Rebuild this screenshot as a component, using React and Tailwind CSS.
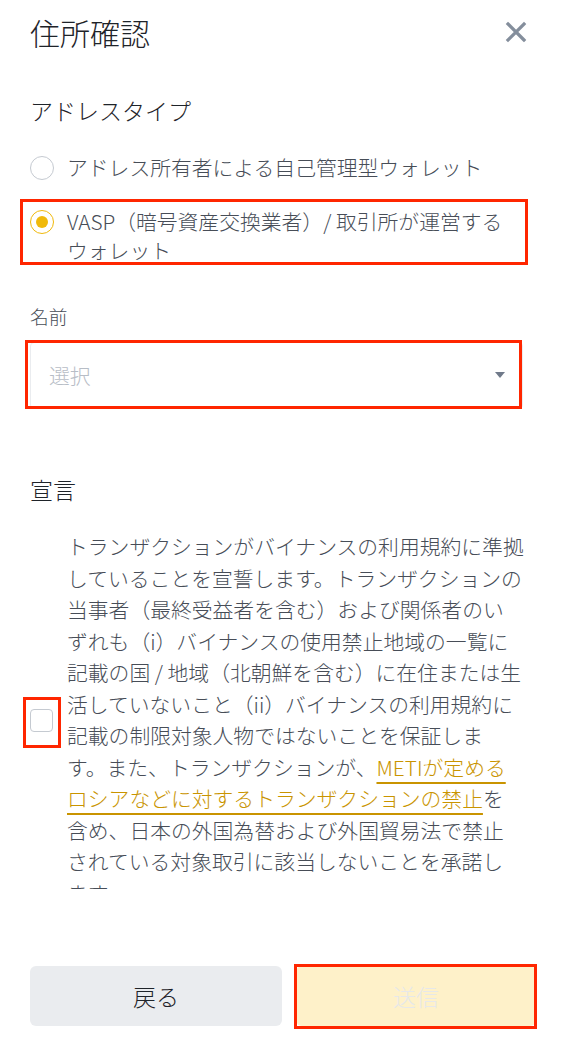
import React from 'react';

const lines = [
  'トランザクションがバイナンスの利用規約に準拠',
  'していることを宣誓します。トランザクションの',
  '当事者（最終受益者を含む）および関係者のい',
  'ずれも（i）バイナンスの使用禁止地域の一覧に',
  '記載の国 / 地域（北朝鮮を含む）に在住または生',
  '活していないこと（ii）バイナンスの利用規約に',
  '記載の制限対象人物ではないことを保証しま',
];

function Radio({ checked }) {
  return (
    <span className="h-[29px] flex items-center shrink-0">
      {checked ? (
        <span className="w-[24px] h-[24px] rounded-full border-[1.5px] border-[#f0b90b] flex items-center justify-center">
          <span className="w-[12px] h-[12px] rounded-full bg-[#f0b90b]" />
        </span>
      ) : (
        <span className="w-[24px] h-[24px] rounded-full border-[1.5px] border-[#c5cad1]" />
      )}
    </span>
  );
}

export default function App() {
  return (
    <div className="relative w-[562px] h-[1054px] bg-white overflow-hidden font-light font-['Noto_Sans_CJK_JP','Noto_Sans',sans-serif]">
      {/* header */}
      <div className="flex items-center justify-between pl-[30px] pr-[35px] pt-[12px] h-[52px]">
        <h1 className="text-[30px] leading-[40px] text-[#1e2329]">住所確認</h1>
        <svg width="22" height="22" viewBox="0 0 22 22" className="text-[#848e9c]">
          <path d="M3 3L19 19M19 3L3 19" stroke="currentColor" strokeWidth="3.2" strokeLinecap="square" />
        </svg>
      </div>

      {/* body */}
      <div className="h-[837px] overflow-hidden px-[30px]">
        <div className="mt-[43px] text-[23px] leading-[30px] text-[#1e2329]">アドレスタイプ</div>

        <div className="mt-[28px] flex flex-col gap-[25px] text-[20.8px] leading-[29px] text-[#474d57]">
          <div className="flex items-start gap-[13px]">
            <Radio />
            <span>アドレス所有者による自己管理型ウォレット</span>
          </div>
          <div className="flex items-start gap-[13px]">
            <Radio checked />
            <span>
              VASP（暗号資産交換業者）/ 取引所が運営する
              <br />
              ウォレット
            </span>
          </div>
        </div>

        <div className="mt-[38px] text-[18.7px] leading-[26px] text-[#474d57]">名前</div>
        <div className="mt-[13px] w-[493px] h-[67px] border border-[#eaecef] rounded-[4px] flex items-center justify-between pl-[18px] pr-[17px]">
          <span className="text-[20.8px] text-[#b7bdc6]">選択</span>
          <svg width="10" height="7" viewBox="0 0 10 7">
            <path d="M0 0H10L5 6Z" fill="#707a8a" />
          </svg>
        </div>

        <div className="mt-[65px] text-[23px] leading-[30px] text-[#1e2329]">宣言</div>

        <div className="mt-[27px] flex items-center gap-[14px]">
          <span className="w-[23px] h-[23px] rounded-[4px] border-[1.5px] border-[#c5cad1] shrink-0" />
          <p className="text-[20.8px] leading-[31.5px] text-[#474d57] whitespace-nowrap">
            {lines.map((l) => (
              <React.Fragment key={l}>
                {l}
                <br />
              </React.Fragment>
            ))}
            す。また、トランザクションが、
            <a className="text-[#c99400] underline decoration-2 underline-offset-[6px]">METIが定める</a>
            <br />
            <a className="text-[#c99400] underline decoration-2 underline-offset-[6px]">ロシアなどに対するトランザクションの禁止</a>を
            <br />
            含め、日本の外国為替および外国貿易法で禁止
            <br />
            されている対象取引に該当しないことを承諾し
            <br />
            ます。
          </p>
        </div>
      </div>

      {/* footer */}
      <div className="mt-[77px] flex gap-[14px] pl-[30px]">
        <button className="w-[252px] h-[60px] rounded-[6px] bg-[#eaecef] text-[23px] text-[#1e2329]">戻る</button>
        <button className="w-[240px] h-[60px] rounded-[6px] bg-[#fef1c9] text-[23px] text-[#e6e8ea]">送信</button>
      </div>

      {/* annotation boxes */}
      <span className="absolute left-[20px] top-[199px] w-[508px] h-[66px] border-[3px] border-[#ff2600]" />
      <span className="absolute left-[25px] top-[340px] w-[497px] h-[69px] border-[3px] border-[#ff2600]" />
      <span className="absolute left-[23px] top-[697px] w-[38px] h-[51px] border-[3px] border-[#ff2600]" />
      <span className="absolute left-[294px] top-[964px] w-[243px] h-[65px] border-[3px] border-[#ff2600]" />
    </div>
  );
}
